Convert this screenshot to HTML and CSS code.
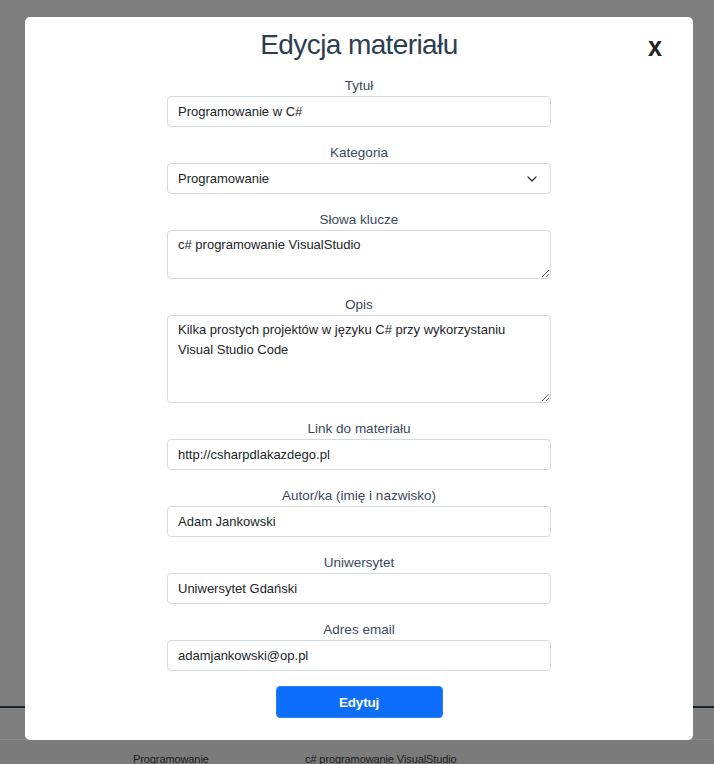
FILE: index.html
```html
<!DOCTYPE html>
<html lang="pl">
<head>
<meta charset="utf-8">
<title>Edycja materiału</title>
<link rel="stylesheet" href="styles.css">
</head>
<body>
<div class="page">
  <div class="page-top"></div>
  <div class="page-rule"></div>
  <div class="page-gap"></div>
  <div class="page-row">
    <span class="cell">Programowanie</span>
    <span class="cell">c# programowanie VisualStudio</span>
  </div>
</div>

<div class="modal">
  <button class="close" type="button">x</button>
  <h1 class="title">Edycja materiału</h1>
  <form class="form">
    <div class="field">
      <label class="label">Tytuł</label>
      <input class="control" type="text" value="Programowanie w C#">
    </div>
    <div class="field">
      <label class="label">Kategoria</label>
      <div class="select-wrap">
        <select class="control select">
          <option>Programowanie</option>
        </select>
        <svg class="chevron" width="10" height="6" viewBox="0 0 10 6"><path d="M1 1l4 4 4-4" fill="none" stroke="#343a40" stroke-width="1.4" stroke-linecap="round" stroke-linejoin="round"/></svg>
      </div>
    </div>
    <div class="field">
      <label class="label">Słowa klucze</label>
      <textarea class="control area area-sm">c# programowanie VisualStudio</textarea>
    </div>
    <div class="field">
      <label class="label">Opis</label>
      <textarea class="control area area-lg">Kilka prostych projektów w języku C# przy wykorzystaniu Visual Studio Code</textarea>
    </div>
    <div class="field">
      <label class="label">Link do materiału</label>
      <input class="control" type="text" value="http://csharpdlakazdego.pl">
    </div>
    <div class="field">
      <label class="label">Autor/ka (imię i nazwisko)</label>
      <input class="control" type="text" value="Adam Jankowski">
    </div>
    <div class="field">
      <label class="label">Uniwersytet</label>
      <input class="control" type="text" value="Uniwersytet Gdański">
    </div>
    <div class="field">
      <label class="label">Adres email</label>
      <input class="control" type="text" value="adamjankowski@op.pl">
    </div>
    <button class="submit" type="button">Edytuj</button>
  </form>
</div>
</body>
</html>
```

FILE: styles.css
```css
* { box-sizing: border-box; }

html, body {
  margin: 0;
  padding: 0;
  height: 100%;
  overflow: hidden;
}

body {
  background: #7f7f7f;
  font-family: "Liberation Sans", Arial, Helvetica, sans-serif;
  color: #2c3e50;
}

.page {
  display: flex;
  flex-direction: column;
}

.page-top { height: 706px; }

.page-rule {
  height: 2px;
  background: #15222f;
}

.page-gap {
  height: 31px;
}

.page-row {
  border-top: 1px solid #8a8a8a;
  background: #7b7b7b;
  display: grid;
  grid-template-columns: 172px 1fr;
  padding: 13px 0 0 133px;
  height: 40px;
}

.cell {
  font-size: 11px;
  line-height: 13px;
  color: #1c1c1c;
  letter-spacing: -0.1px;
}

.modal {
  position: absolute;
  left: 25px;
  top: 17px;
  width: 668px;
  background: #fff;
  border-radius: 5px;
  padding: 11px 0 22px;
}

.close {
  position: absolute;
  left: 623px;
  top: 16px;
  margin: 0;
  padding: 0;
  border: none;
  background: none;
  font-family: "Liberation Sans", Arial, sans-serif;
  font-weight: 700;
  font-size: 28px;
  line-height: 28px;
  color: #222;
  transform: scaleX(0.9);
  transform-origin: left center;
}

.title {
  margin: 0 0 16px;
  font-size: 28px;
  line-height: 34px;
  font-weight: 400;
  letter-spacing: -0.6px;
  text-align: center;
  color: #2c3e50;
}

.form {
  width: 384px;
  margin: 0 auto;
  display: flex;
  flex-direction: column;
  gap: 18px;
}

.field {
  display: flex;
  flex-direction: column;
  gap: 2px;
}

.label {
  display: block;
  font-size: 13.5px;
  line-height: 16px;
  text-align: center;
  color: #3a4a5c;
}

.control {
  display: block;
  width: 100%;
  height: 31px;
  margin: 0;
  padding: 0 10px;
  border: 1px solid #d5dade;
  border-radius: 4px;
  background: #fff;
  font-family: "Liberation Sans", Arial, sans-serif;
  font-size: 13px;
  color: #212529;
  outline: none;
}

.select-wrap {
  position: relative;
}

.select {
  appearance: none;
  -webkit-appearance: none;
}

.chevron {
  position: absolute;
  right: 14px;
  top: 13px;
  pointer-events: none;
}

.area {
  padding: 4px 10px;
  line-height: 20px;
  resize: vertical;
}

.area-sm { height: 49px; }
.area-lg { height: 88px; }

.submit {
  align-self: center;
  width: 167px;
  height: 32px;
  margin-top: -3px;
  border: 1px solid #2a7ffd;
  border-radius: 4px;
  background: #0d6efd;
  color: #fff;
  font-family: "Liberation Sans", Arial, sans-serif;
  font-weight: 700;
  font-size: 13.5px;
  letter-spacing: -0.2px;
}
```
